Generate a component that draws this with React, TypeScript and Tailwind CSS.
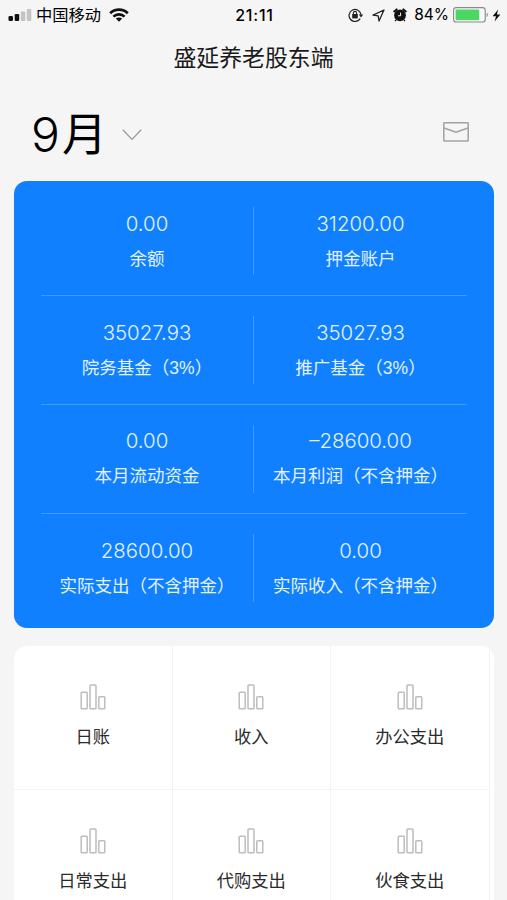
import type { ReactNode } from 'react'

type Stat = {
  value: string
  label: string
}

const statRows: [Stat, Stat][] = [
  [
    { value: '0.00', label: '余额' },
    { value: '31200.00', label: '押金账户' }
  ],
  [
    { value: '35027.93', label: '院务基金（3%）' },
    { value: '35027.93', label: '推广基金（3%）' }
  ],
  [
    { value: '0.00', label: '本月流动资金' },
    { value: '–28600.00', label: '本月利润（不含押金）' }
  ],
  [
    { value: '28600.00', label: '实际支出（不含押金）' },
    { value: '0.00', label: '实际收入（不含押金）' }
  ]
]

const menuItems = ['日账', '收入', '办公支出', '日常支出', '代购支出', '伙食支出']

function SignalIcon() {
  return (
    <svg width="24" height="14" viewBox="0 0 24 14">
      <rect x="0.5" y="8" width="4.5" height="5" rx="1.2" fill="#111" />
      <rect x="6.7" y="6" width="4.5" height="7" rx="1.2" fill="#111" />
      <rect x="12.8" y="3.5" width="4.5" height="9.5" rx="1" fill="#c4c4c4" />
      <rect x="18.8" y="1" width="4.5" height="12" rx="1" fill="#c4c4c4" />
    </svg>
  )
}

function WifiIcon() {
  return (
    <svg width="20" height="14" viewBox="0 0 20 14" fill="none" stroke="#111" strokeWidth="2.7">
      <path d="M1.2 5.2C6 0.4 14 0.4 18.8 5.2" />
      <path d="M4.4 8.6C7.5 5.6 12.5 5.6 15.6 8.6" />
      <path d="M10 13.8L6.8 10.6C8.6 9 11.4 9 13.2 10.6Z" fill="#111" stroke="none" />
    </svg>
  )
}

function RotationLockIcon() {
  return (
    <svg width="16" height="14" viewBox="0 0 16 14" fill="none" stroke="#222" strokeWidth="1.2">
      <path d="M12.2 10.6A6 6 0 1 1 13 6.6" />
      <path d="M10.8 6.4H15.2L13 9.4Z" fill="#222" stroke="none" />
      <rect x="4.2" y="6" width="5.6" height="4.4" fill="#222" stroke="none" />
      <path d="M5.4 6.4V5A1.6 1.6 0 0 1 8.6 5V6.4" strokeWidth="1.1" />
    </svg>
  )
}

function LocationIcon() {
  return (
    <svg width="13" height="13" viewBox="0 0 13 13" fill="none" stroke="#222" strokeWidth="1.3">
      <path d="M12 1L1 6.2L6.2 6.8L7 12Z" strokeLinejoin="round" />
    </svg>
  )
}

function AlarmIcon() {
  return (
    <svg width="14" height="14" viewBox="0 0 14 14">
      <circle cx="7" cy="7.3" r="5.9" fill="#111" />
      <path d="M1.2 3.4L3.6 1.4M12.8 3.4L10.4 1.4" stroke="#111" strokeWidth="2" strokeLinecap="round" />
      <path d="M3 12L2.2 13.2M11 12L11.8 13.2" stroke="#111" strokeWidth="1.4" />
      <path d="M7.6 4.6V7.8H5" fill="none" stroke="#f5f5f5" strokeWidth="1" />
    </svg>
  )
}

function BatteryIcon() {
  return (
    <svg width="36" height="16" viewBox="0 0 36 16">
      <rect x="0.6" y="0.6" width="31.6" height="14.4" rx="2.6" fill="#fafafa" stroke="#888" strokeWidth="1.1" />
      <rect x="2.6" y="2.4" width="23.6" height="10.8" rx="0.8" fill="#4cd663" />
      <path d="M33.6 5.4C35.2 6.2 35.2 9.4 33.6 10.2Z" fill="#888" />
    </svg>
  )
}

function BoltIcon() {
  return (
    <svg width="9" height="13" viewBox="0 0 9 13">
      <path d="M6.2 0.4L0.6 7.2H4L2.6 12.4L8.4 5.4H4.9Z" fill="#111" />
    </svg>
  )
}

function ChevronIcon() {
  return (
    <svg width="20" height="12" viewBox="0 0 20 12" fill="none" stroke="#999" strokeWidth="1.3">
      <path d="M0.8 0.8L10 10.4L19.2 0.8" />
    </svg>
  )
}

function MailIcon() {
  return (
    <svg width="26" height="20" viewBox="0 0 26 20" fill="none" stroke="#a3a3a3" strokeWidth="1.5">
      <rect x="0.8" y="0.8" width="24.4" height="18.2" rx="0.6" />
      <path d="M1 6L13 10.2L25 6" />
    </svg>
  )
}

function BarsIcon() {
  return (
    <svg width="26" height="26" viewBox="0 0 26 26" fill="none" stroke="#bdbdbd" strokeWidth="1.5">
      <rect x="1.2" y="8.2" width="6" height="16.6" rx="0.8" />
      <rect x="10" y="1" width="6" height="23.8" rx="0.8" />
      <rect x="18.8" y="12.8" width="6" height="12" rx="0.8" />
    </svg>
  )
}

function StatusBar() {
  return (
    <div className="grid h-[30px] grid-cols-[1fr_auto_1fr] items-center pr-[6px] pl-2 text-black">
      <div className="flex items-center">
        <SignalIcon />
        <span className="ml-1 text-[16.3px]">中国移动</span>
        <span className="ml-2">
          <WifiIcon />
        </span>
      </div>
      <span className="text-[16px] font-medium tracking-[0.8px]">21:11</span>
      <div className="flex items-center justify-end">
        <RotationLockIcon />
        <span className="ml-2">
          <LocationIcon />
        </span>
        <span className="ml-2">
          <AlarmIcon />
        </span>
        <span className="ml-[7px] text-[15.5px]">84%</span>
        <span className="ml-1">
          <BatteryIcon />
        </span>
        <span className="ml-[3px]">
          <BoltIcon />
        </span>
      </div>
    </div>
  )
}

function StatCell({ stat, children }: { stat: Stat; children?: ReactNode }) {
  return (
    <div className="flex w-1/2 items-center">
      <div className="flex flex-1 flex-col items-center whitespace-nowrap">
        <span className="text-[20.4px] leading-[28px] font-light">{stat.value}</span>
        <span className="mt-[7px] font-['Liberation_Sans','Noto_Sans_CJK_SC',sans-serif] text-[17.5px] leading-[28px]">
          {stat.label}
        </span>
      </div>
      {children}
    </div>
  )
}

export default function App() {
  return (
    <div className="h-[900px] w-[507px] overflow-hidden bg-[#f5f5f5] font-[Inter,'Noto_Sans_CJK_SC',sans-serif]">
      <StatusBar />
      <h1 className="mt-3 text-center text-[22.9px] leading-[32px] text-[#1a1a1a]">盛延养老股东端</h1>

      <div className="mt-[27px] flex h-[66px] items-center pr-[38px] pl-[31px]">
        <div className="flex items-center leading-none text-black">
          <span className="mt-[2px] text-[48px] font-light">9</span>
          <span className="ml-[2px] text-[45px]">月</span>
        </div>
        <span className="mt-[2px] ml-[15px]">
          <ChevronIcon />
        </span>
        <span className="mb-1 ml-auto">
          <MailIcon />
        </span>
      </div>

      <section className="mr-[13px] ml-[14px] mt-[14px] h-[447px] rounded-[13px] bg-[#1080ff] px-[27px] pt-[6.6px] text-[#e2f2ff]">
        {statRows.map(([left, right]) => (
          <div
            key={left.label}
            className="flex h-[108.7px] items-center border-b border-[#459cff] last:border-b-0"
          >
            <StatCell stat={left}>
              <div className="h-[68px] w-px bg-[#459cff]" />
            </StatCell>
            <StatCell stat={right} />
          </div>
        ))}
      </section>

      <section className="mr-[13px] ml-[14px] mt-[18px] grid grid-cols-[repeat(3,158.5px)] overflow-hidden rounded-t-[13px] bg-white">
        {menuItems.map((item) => (
          <div
            key={item}
            className="flex h-[143.5px] flex-col items-center border-r border-b border-[#f3f3f3] pt-[38px]"
          >
            <BarsIcon />
            <span className="mt-[13px] text-[17.3px] leading-[28px] text-[#2b2b2b]">{item}</span>
          </div>
        ))}
      </section>
    </div>
  )
}
